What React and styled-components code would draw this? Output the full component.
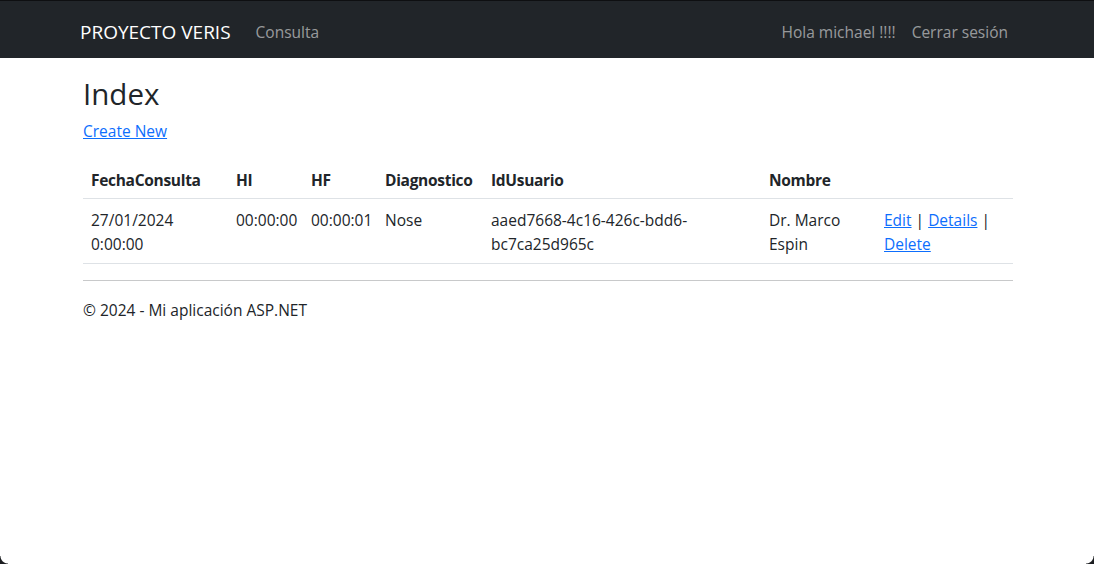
import React from "react";
import styled, { createGlobalStyle } from "styled-components";

const Global = createGlobalStyle`
  html, body { margin: 0; padding: 0; background: #fff; }
  body {
    font-family: "Open Sans", "Noto Sans", sans-serif;
    font-size: 15.5px;
    line-height: 24px;
    color: #212529;
  }
  * { box-sizing: border-box; }
`;

const Page = styled.div`
  position: relative;
  width: 1094px;
  height: 564px;
  overflow: hidden;
  background: #fff;
`;

const Navbar = styled.nav`
  height: 58px;
  background: #212529;
  border-top: 1px solid #0e0f11;
  display: flex;
  align-items: center;
  padding: 4px 86px 0 80px;
`;

const Brand = styled.a`
  font-size: 19px;
  color: #fff;
  text-decoration: none;
  margin-right: 25px;
`;

const NavLink = styled.a`
  font-size: 15.5px;
  color: rgba(255, 255, 255, 0.55);
  text-decoration: none;
  margin-left: ${(p) => p.$gap || 0}px;
`;

const Spacer = styled.div`
  flex: 1;
`;

const Main = styled.main`
  width: 930px;
  margin-left: 83px;
  padding-top: 17px;
`;

const Title = styled.h1`
  font-size: 29.5px;
  font-weight: 400;
  line-height: 38px;
  margin: 0 0 6px;
`;

const Link = styled.a`
  color: #0d6efd;
  text-decoration: underline;
`;

const P = styled.p`
  margin: 0 0 17px;
`;

const Table = styled.table`
  width: 930px;
  border-collapse: collapse;
  table-layout: fixed;
  margin-bottom: 16px;
`;

const Th = styled.th`
  text-align: left;
  font-weight: 700;
  padding: 8px 8px 6px;
  border-bottom: 1px solid #dee2e6;
  vertical-align: bottom;
  white-space: nowrap;
  letter-spacing: -0.3px;
`;

const Td = styled.td`
  padding: 9px 8px 7px;
  border-bottom: 1px solid #dee2e6;
  vertical-align: top;
`;

const Hr = styled.hr`
  margin: 0;
  border: 0;
  border-top: 1px solid #c8c9ca;
`;

const Footer = styled.footer`
  padding-top: 17px;
`;

const Corner = styled.div`
  position: absolute;
  bottom: 0;
  ${(p) => (p.$right ? "right: 0;" : "left: 0;")}
  width: 8px;
  height: 8px;
  background: radial-gradient(
    circle at ${(p) => (p.$right ? "0 0" : "100% 0")},
    transparent 7px,
    #1b1d20 8px
  );
`;

const cols = [145, 75, 74, 106, 278, 115, 137];

export default function App() {
  return (
    <>
      <Global />
      <Page>
        <Navbar>
          <Brand href="#">PROYECTO VERIS</Brand>
          <NavLink href="#">Consulta</NavLink>
          <Spacer />
          <NavLink href="#">Hola michael !!!!</NavLink>
          <NavLink href="#" $gap={16}>Cerrar sesión</NavLink>
        </Navbar>
        <Main>
          <Title>Index</Title>
          <P>
            <Link href="#">Create New</Link>
          </P>
          <Table>
            <colgroup>
              {cols.map((w, i) => (
                <col key={i} style={{ width: w }} />
              ))}
            </colgroup>
            <thead>
              <tr>
                <Th>FechaConsulta</Th>
                <Th>HI</Th>
                <Th>HF</Th>
                <Th>Diagnostico</Th>
                <Th>IdUsuario</Th>
                <Th>Nombre</Th>
                <Th></Th>
              </tr>
            </thead>
            <tbody>
              <tr>
                <Td>27/01/2024 0:00:00</Td>
                <Td>00:00:00</Td>
                <Td>00:00:01</Td>
                <Td>Nose</Td>
                <Td>aaed7668-4c16-426c-bdd6-<br />bc7ca25d965c</Td>
                <Td>Dr. Marco Espin</Td>
                <Td>
                  <Link href="#">Edit</Link> | <Link href="#">Details</Link> |{" "}
                  <Link href="#">Delete</Link>
                </Td>
              </tr>
            </tbody>
          </Table>
          <Hr />
          <Footer>© 2024 - Mi aplicación ASP.NET</Footer>
        </Main>
        <Corner />
        <Corner $right />
      </Page>
    </>
  );
}
